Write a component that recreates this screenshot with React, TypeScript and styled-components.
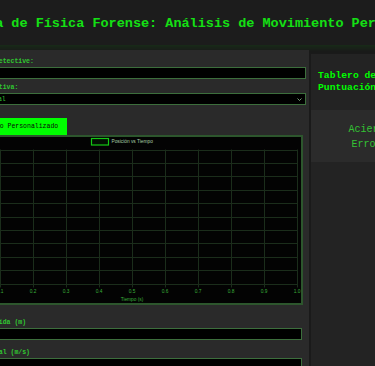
import React from "react";
import styled, { createGlobalStyle } from "styled-components";

const GlobalStyle = createGlobalStyle`
  html, body {
    margin: 0;
    padding: 0;
    background: #1a1a1a;
    overflow: hidden;
  }
  body {
    font-family: "Liberation Mono", "Courier New", monospace;
  }
`;

const CHART_W = 347;
const CHART_H = 166;
const X0 = 13;
const DX = 33;
const Y0 = 12.5;
const DY = 13.4;
const ticks = Array.from({ length: 11 }, (_, i) => i);

const PositionChart = () => (
  <ChartSvg viewBox={`0 0 ${CHART_W} ${CHART_H}`} width={CHART_W} height={CHART_H}>
    {ticks.map((i) => (
      <line
        key={`v${i}`}
        x1={X0 + DX * i + 0.5}
        x2={X0 + DX * i + 0.5}
        y1={Y0}
        y2={Y0 + DY * 10 + 4}
        stroke="#1b2d1b"
        strokeWidth={1}
      />
    ))}
    {ticks.map((j) => (
      <line
        key={`h${j}`}
        x1={X0 - 4}
        x2={X0 + DX * 10}
        y1={Math.round(Y0 + DY * j) + 0.5}
        y2={Math.round(Y0 + DY * j) + 0.5}
        stroke="#1b2d1b"
        strokeWidth={1}
      />
    ))}
    {ticks.map((i) => (
      <text
        key={`xl${i}`}
        x={X0 + DX * i}
        y={155.7}
        textAnchor="middle"
        fontSize={4.8}
        fill="#3aaf3a"
        fontFamily="Liberation Sans, Arial, sans-serif"
      >
        {i === 0 ? "0" : (i / 10).toFixed(1)}
      </text>
    ))}
    {ticks.map((j) => (
      <text
        key={`yl${j}`}
        x={X0 - 6}
        y={Y0 + DY * j + 1.7}
        textAnchor="end"
        fontSize={4.8}
        fill="#3aaf3a"
        fontFamily="Liberation Sans, Arial, sans-serif"
      >
        {10 - j}
      </text>
    ))}
    <text
      x={178}
      y={163.8}
      textAnchor="middle"
      fontSize={4.8}
      fill="#3aaf3a"
      fontFamily="Liberation Sans, Arial, sans-serif"
    >
      Tiempo (s)
    </text>
    <rect x={137.5} y={1.5} width={17} height={6.5} fill="rgba(0,255,0,0.05)" stroke="#14c814" strokeWidth={1.2} />
    <text
      x={157.5}
      y={6.4}
      fontSize={4.8}
      fill="#a8d0a8"
      fontFamily="Liberation Sans, Arial, sans-serif"
    >
      Posición vs Tiempo
    </text>
  </ChartSvg>
);

export default function App() {
  return (
    <>
      <GlobalStyle />
      <Page>
        <Header>
          <Title>Práctica de Física Forense: Análisis de Movimiento Personalizado</Title>
        </Header>
        <Main>
          <ControlPanel>
            <FieldGroup $gap={4}>
              <Label>Nombre del Detective:</Label>
              <TextInput defaultValue="" />
            </FieldGroup>
            <FieldGroup $gap={13}>
              <Label>Teoría Tentativa:</Label>
              <SelectWrap>
                <Select defaultValue="vertical">
                  <option value="vertical">Tiro Vertical</option>
                  <option value="libre">Caída Libre</option>
                </Select>
                <Chevron width="5" height="3" viewBox="0 0 5 3">
                  <polyline points="0.5,0.5 2.5,2.5 4.5,0.5" fill="none" stroke="#8fbf8f" strokeWidth="0.8" />
                </Chevron>
              </SelectWrap>
            </FieldGroup>
            <TabRow>
              <TabButton>Experimento Personalizado</TabButton>
            </TabRow>
            <ChartCard>
              <PositionChart />
            </ChartCard>
            <ParamsSection>
              <FieldGroup $gap={7.5}>
                <Label $tight>Altura de Caída (m)</Label>
                <TextInput $inset defaultValue="" />
              </FieldGroup>
              <FieldGroup $gap={0}>
                <Label $tight>Veloc. Inicial (m/s)</Label>
                <TextInput $inset defaultValue="" />
              </FieldGroup>
            </ParamsSection>
          </ControlPanel>
          <ScorePanel>
            <ScoreHeading>Tablero de Puntuación</ScoreHeading>
            <Stats>
              <StatLine>Aciertos: 0</StatLine>
              <StatLine>Errores: 0</StatLine>
            </Stats>
          </ScorePanel>
        </Main>
      </Page>
    </>
  );
}

const Page = styled.div`
  width: 512px;
  margin-left: -60px;
`;

const Header = styled.header`
  height: 45px;
  box-sizing: border-box;
  padding: 2px 0 0 3.4px;
  background: #1c1c1c;
  display: flex;
  align-items: center;
  justify-content: center;
  box-shadow: 0 2px 6px rgba(0, 255, 0, 0.1);
`;

const Title = styled.h1`
  margin: 0;
  flex-shrink: 0;
  font-size: 13.5px;
  line-height: 1;
  font-weight: bold;
  color: #14e014;
  white-space: nowrap;
`;

const Main = styled.main`
  display: flex;
  gap: 2px;
  margin-top: 5px;
  align-items: stretch;
`;

const ControlPanel = styled.section`
  width: 369px;
  box-sizing: border-box;
  padding: 7px 3px 20px 12px;
  background: #2a2a2a;
`;

const FieldGroup = styled.div<{ $gap: number }>`
  margin-bottom: ${(p) => p.$gap}px;
`;

const Label = styled.label<{ $tight?: boolean }>`
  display: block;
  font-size: 6.5px;
  line-height: 9px;
  font-weight: bold;
  color: #30c830;
  margin-bottom: ${(p) => (p.$tight ? "1.5px" : "1px")};
`;

const TextInput = styled.input<{ $inset?: boolean }>`
  display: block;
  width: ${(p) => (p.$inset ? "calc(100% - 4px)" : "100%")};
  height: 12px;
  box-sizing: border-box;
  padding: 0 3px;
  background: #000;
  border: 1px solid #3c6e3c;
  color: #0f0;
  font-family: "Liberation Mono", monospace;
  font-size: 6.5px;
  outline: none;
`;

const SelectWrap = styled.div`
  position: relative;
`;

const Select = styled.select`
  display: block;
  width: 100%;
  height: 12px;
  box-sizing: border-box;
  padding: 0 2px;
  background: #000;
  border: 1px solid #3c6e3c;
  border-radius: 0;
  color: #30c830;
  font-family: "Liberation Mono", monospace;
  font-size: 6.5px;
  appearance: none;
  outline: none;
`;

const Chevron = styled.svg`
  position: absolute;
  right: 4px;
  top: 4.5px;
  pointer-events: none;
`;

const TabRow = styled.div`
  display: flex;
`;

const TabButton = styled.button`
  height: 17px;
  padding: 0 8.7px;
  background: #00ff00;
  border: none;
  border-radius: 0;
  color: #0a0a0a;
  font-family: "Liberation Mono", monospace;
  font-size: 6.5px;
  cursor: pointer;
`;

const ChartCard = styled.div`
  height: 170px;
  margin-right: 3px;
  box-sizing: border-box;
  border: 2px solid #2d562d;
  background: #030303;
  overflow: hidden;
`;

const ChartSvg = styled.svg`
  display: block;
`;

const ParamsSection = styled.div`
  margin-top: 12.5px;
`;

const ScorePanel = styled.aside`
  width: 141px;
  margin-top: 4px;
  background: #232323;
  display: flex;
  flex-direction: column;
`;

const ScoreHeading = styled.h2`
  margin: 0;
  padding: 16px 20px 17px 7px;
  font-size: 9.7px;
  line-height: 11.5px;
  font-weight: bold;
  color: #0f0;
`;

const Stats = styled.div`
  background: #2b2b2b;
  padding: 11.5px 0 9.5px;
  text-align: center;
`;

const StatLine = styled.div`
  font-size: 10px;
  line-height: 15.7px;
  color: #33c433;
`;
